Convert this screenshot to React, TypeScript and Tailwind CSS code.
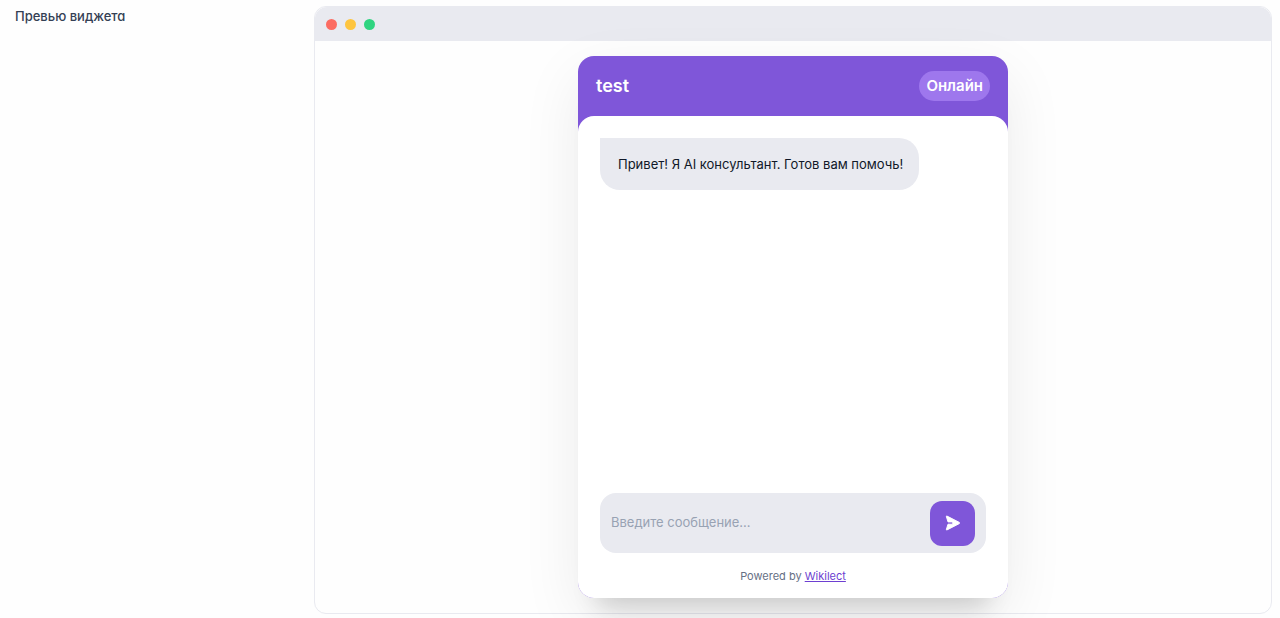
const SendIcon = () => (
  <svg
    viewBox="0 0 16 16"
    fill="currentColor"
    stroke="currentColor"
    strokeWidth="1"
    strokeLinejoin="round"
    className="size-4"
    aria-hidden="true"
  >
    <path d="M1.4 1.6Q1.1.8 2 1.1L14.3 7.4Q15 8 14.3 8.6L2 14.9Q1.1 15.2 1.4 14.4L3 9.2H7.8V6.9H3Z" />
  </svg>
);

const ChatWidget = () => {
  return (
    <section className="flex w-full max-w-[430px] flex-col rounded-2xl bg-[#7f56d9] shadow-[0_20px_60px_rgba(0,0,0,0.08),0_28px_24px_-20px_rgba(0,0,0,0.16)]">
      <header className="flex h-[60px] items-center justify-between px-[18px]">
        <h2 className="text-lg font-semibold text-white">test</h2>
        <span className="rounded-full bg-[#9e77ed] px-[7px] py-[3px] text-[15px] leading-6 font-semibold text-white">
          Онлайн
        </span>
      </header>
      <div className="flex min-h-[482px] flex-col rounded-2xl bg-white px-[22px] pt-[22px] pb-[14px]">
        <div className="self-start rounded-[20px] rounded-tl-none bg-[#e9eaf0] py-4 pr-4 pl-[18px] text-[13px] leading-5 text-[#101828]">
          Привет! Я AI консультант. Готов вам помочь!
        </div>
        <form
          className="mt-auto flex h-[60px] items-center rounded-2xl bg-[#e9eaf0] px-[11px]"
          onSubmit={(e) => e.preventDefault()}
        >
          <input
            type="text"
            aria-label="Введите сообщение..."
            placeholder="Введите сообщение..."
            className="min-w-0 flex-1 bg-transparent text-[13px] text-[#101828] outline-none placeholder:text-[#98a2b3]"
          />
          <button
            type="submit"
            aria-label="Отправить"
            className="flex size-[45px] items-center justify-center rounded-xl bg-[#7f56d9] text-white"
          >
            <SendIcon />
          </button>
        </form>
        <p className="mt-[15px] text-center text-[11px] leading-4 text-[#667085]">
          Powered by{" "}
          <a href="#" className="text-[#6d3fd1] underline">
            Wikilect
          </a>
        </p>
      </div>
    </section>
  );
};

const App = () => {
  return (
    <main className="grid grid-cols-[299px_1fr] overflow-hidden bg-[#fefefe] pt-[6px] pr-2 pb-1 pl-[15px] font-[Inter,sans-serif]">
      <h1 className="text-[13px] leading-5 font-medium text-[#344054] [font-feature-settings:'cv11']">
        Превью виджета
      </h1>
      <div className="rounded-xl border border-[#e9eaf0]">
        <div className="flex h-[34px] items-center gap-2 rounded-t-xl bg-[#e9eaf0] px-[11px]">
          <span className="size-[11px] rounded-full bg-[#fc6c62]" />
          <span className="size-[11px] rounded-full bg-[#fec53f]" />
          <span className="size-[11px] rounded-full bg-[#2fd480]" />
        </div>
        <div className="flex justify-center px-4 py-[15px]">
          <ChatWidget />
        </div>
      </div>
    </main>
  );
};

export default App;
